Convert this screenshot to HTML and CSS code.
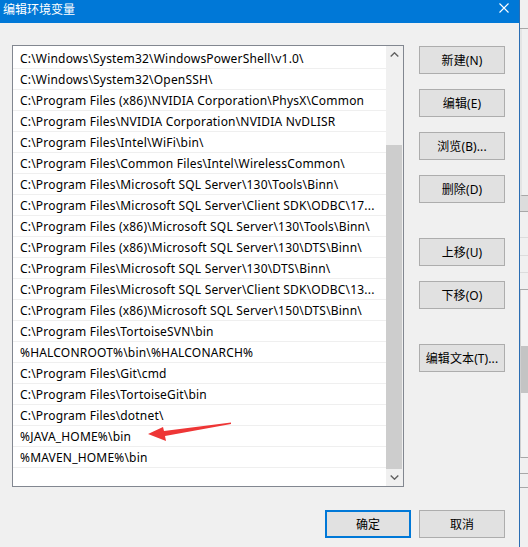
FILE: index.html
```
<!DOCTYPE html>
<html lang="zh-CN">
<head>
<meta charset="utf-8">
<title>编辑环境变量</title>
<link rel="stylesheet" href="styles.css">
</head>
<body>
<div class="window">
  <div class="titlebar">
    <span class="title">编辑环境变量</span>
    <svg class="close" viewBox="0 0 10 10" width="10" height="10"><path d="M0.5 0.5 L9.5 9.5 M9.5 0.5 L0.5 9.5" stroke="#fff" stroke-width="1.1" fill="none"/></svg>
  </div>
  <div class="body">
    <div class="main">
      <div class="listbox">
        <div class="rows">
          <div class="row">C:\Windows\System32\WindowsPowerShell\v1.0\</div>
          <div class="row">C:\Windows\System32\OpenSSH\</div>
          <div class="row">C:\Program Files (x86)\NVIDIA Corporation\PhysX\Common</div>
          <div class="row">C:\Program Files\NVIDIA Corporation\NVIDIA NvDLISR</div>
          <div class="row">C:\Program Files\Intel\WiFi\bin\</div>
          <div class="row">C:\Program Files\Common Files\Intel\WirelessCommon\</div>
          <div class="row">C:\Program Files\Microsoft SQL Server\130\Tools\Binn\</div>
          <div class="row">C:\Program Files\Microsoft SQL Server\Client SDK\ODBC\17...</div>
          <div class="row">C:\Program Files (x86)\Microsoft SQL Server\130\Tools\Binn\</div>
          <div class="row">C:\Program Files (x86)\Microsoft SQL Server\130\DTS\Binn\</div>
          <div class="row">C:\Program Files\Microsoft SQL Server\130\DTS\Binn\</div>
          <div class="row">C:\Program Files\Microsoft SQL Server\Client SDK\ODBC\13...</div>
          <div class="row">C:\Program Files (x86)\Microsoft SQL Server\150\DTS\Binn\</div>
          <div class="row">C:\Program Files\TortoiseSVN\bin</div>
          <div class="row">%HALCONROOT%\bin\%HALCONARCH%</div>
          <div class="row">C:\Program Files\Git\cmd</div>
          <div class="row">C:\Program Files\TortoiseGit\bin</div>
          <div class="row">C:\Program Files\dotnet\</div>
          <div class="row">%JAVA_HOME%\bin</div>
          <div class="row">%MAVEN_HOME%\bin</div>
        </div>
        <div class="scrollbar">
          <div class="sb-btn"><svg viewBox="0 0 9 5" width="9" height="5"><path d="M0.7 4.5 L4.5 0.8 L8.3 4.5" stroke="#606060" stroke-width="1.4" fill="none"/></svg></div>
          <div class="sb-track"><div class="sb-thumb"></div></div>
          <div class="sb-btn"><svg viewBox="0 0 9 5" width="9" height="5"><path d="M0.7 0.5 L4.5 4.2 L8.3 0.5" stroke="#606060" stroke-width="1.4" fill="none"/></svg></div>
        </div>
      </div>
      <div class="buttons">
        <div class="btn">新建(N)</div>
        <div class="btn">编辑(E)</div>
        <div class="btn">浏览(B)...</div>
        <div class="btn">删除(D)</div>
        <div class="btn spaced">上移(U)</div>
        <div class="btn">下移(O)</div>
        <div class="btn spaced">编辑文本(T)...</div>
      </div>
    </div>
    <div class="footer">
      <div class="btn default">确定</div>
      <div class="btn">取消</div>
    </div>
  </div>
  <svg class="arrow" viewBox="0 0 100 30" width="100" height="30"><polygon points="8,16 23,9 24,13 91,4.5 91,6 25,18 26,23" fill="#ee3636"/></svg>
</div>
<div class="wborder"></div>
<div class="side">
  <div class="s s1"></div>
  <div class="s s2"></div>
  <div class="s s3"></div>
  <div class="s s4"></div>
  <div class="s s5"></div>
  <div class="s s6"></div>
  <div class="s s7"></div>
  <div class="s s8"></div>
  <div class="s s9"></div>
  <div class="s s10"></div>
</div>
</body>
</html>
```
FILE: styles.css
```
* { box-sizing: border-box; }
html, body { margin: 0; height: 547px; overflow: hidden; }
body {
  display: flex;
  background: #f0f0f0;
  font-family: "Noto Sans", "Noto Sans CJK SC", sans-serif;
  font-size: 12px;
  color: #000;
}
.window {
  position: relative;
  width: 519px;
  height: 547px;
  display: flex;
  flex-direction: column;
  background: #f0f0f0;
}
.titlebar {
  height: 23px;
  background: #0078d7;
  color: #fff;
  display: flex;
  justify-content: space-between;
  align-items: flex-start;
  padding: 0 10px 0 3px;
}
.title { font-family: "Noto Sans CJK SC", sans-serif; line-height: 17px; }
.close { margin-top: 3px; }
.body {
  padding: 22px 14px 0 12px;
  display: flex;
  flex-direction: column;
}
.main { display: flex; gap: 15px; }
.listbox {
  width: 392px;
  height: 442px;
  border: 1px solid #828790;
  background: #fff;
  display: flex;
}
.rows { flex: 1; padding-top: 2px; overflow: hidden; }
.row {
  height: 21px;
  border-bottom: 1px solid #efefef;
  padding-left: 7px;
  line-height: 21px;
  letter-spacing: 0.19px;
  white-space: nowrap;
  overflow: hidden;
}
.scrollbar {
  width: 17px;
  background: #f0f0f0;
  display: flex;
  flex-direction: column;
}
.sb-btn { height: 17px; display: flex; align-items: center; justify-content: center; }
.sb-track { flex: 1; display: flex; flex-direction: column; justify-content: flex-end; }
.sb-thumb { height: 324px; background: #cdcdcd; margin-right: 1px; }
.buttons { display: flex; flex-direction: column; gap: 15px; padding-top: 1px; }
.btn {
  width: 86px;
  height: 28px;
  background: #e1e1e1;
  border: 1px solid #adadad;
  display: flex;
  align-items: center;
  justify-content: center;
  white-space: nowrap;
  letter-spacing: 0.1px;
}
.btn.spaced { margin-top: 20px; }
.btn.default { border: 2px solid #0078d7; }
.footer { display: flex; justify-content: flex-end; gap: 8px; margin-top: 23px; }
.arrow { position: absolute; left: 140px; top: 418px; }
.wborder { width: 1px; background: #2a6db3; }
.side { flex: 1; display: flex; flex-direction: column; background: #f0f0f0; }
.s { border-bottom: 1px solid #a8a8a8; }
.s1 { height: 29px; }
.s2 { height: 167px; border-left: 2px solid #e4e4e4; }
.s3 { height: 16px; background: #dcdcdc; }
.s4 { height: 26px; border-bottom-color: #dcdcdc; }
.s5 { height: 18px; border-bottom-color: #dcdcdc; }
.s6 { height: 17px; border-bottom-color: #dcdcdc; }
.s7 { height: 17px; }
.s8 { height: 168px; background: linear-gradient(#f3f3f3 0 56px, #c4c4c4 56px 103px, #f3f3f3 103px); border-left: 1px solid #d0d0d0; }
.s9 { height: 16px; }
.s10 { height: 14px; }
```
